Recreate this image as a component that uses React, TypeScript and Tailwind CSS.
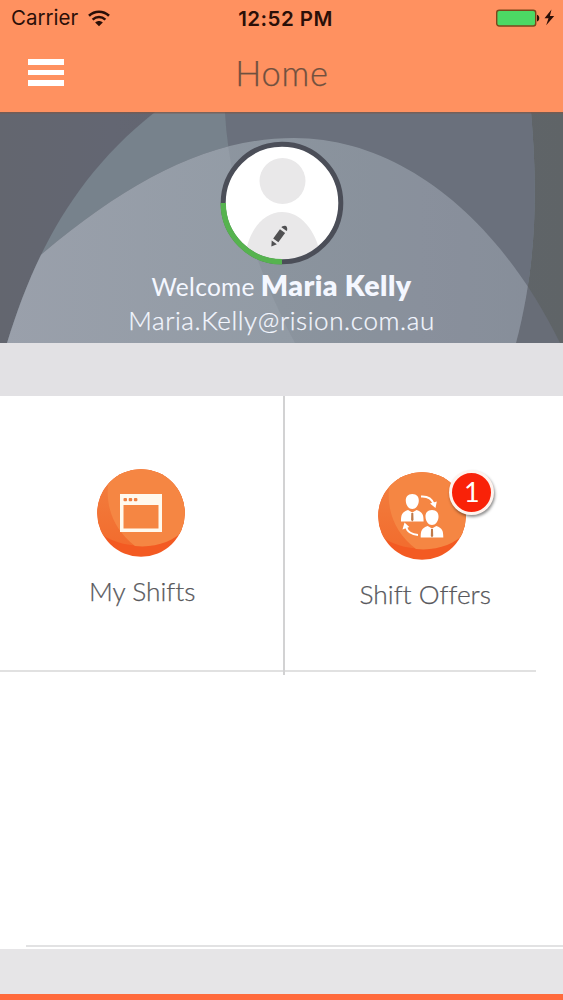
/* ---------------- Header -------------- */
function StatusBar() {
  return (
    <div className="flex h-[36px] items-center justify-between pl-[11px] pr-[8px] text-[#2a0f08] font-['Inter',sans-serif]">
      <div className="flex w-[200px] items-center gap-[10px] pt-px">
        <span className="text-[20.5px] leading-none">Carrier</span>
        <svg width="22" height="17" viewBox="0 0 22 17" fill="none" stroke="currentColor">
          <path d="M1 5.8C6.8.4 15.2.4 21 5.8" strokeWidth="2.6" />
          <path d="M4.6 9.6c3.8-3.4 9-3.4 12.8 0" strokeWidth="2.5" />
          <path d="M11 16.3 7.2 12.6c2.2-2 5.4-2 7.6 0z" fill="currentColor" stroke="none" />
        </svg>
      </div>
      <span className="pt-[2px] pl-[5px] text-[20.5px] font-semibold leading-none tracking-[0.45px] whitespace-nowrap">12:52 PM</span>
      <div className="flex w-[200px] justify-end">
        <svg width="60" height="20" viewBox="0 0 60 20">
          <rect x="1.7" y="2.2" width="39" height="15.8" rx="2.5" fill="#4cd964" stroke="#7b481b" strokeWidth="1.4" />
          <path d="M42 6.8c3 .5 3 6.2 0 6.7z" fill="#2a0f08" />
          <path d="M56.5 1.5 49.5 10.3h4l-2.3 6.9 8-9.2h-4.3z" fill="#2a0f08" />
        </svg>
      </div>
    </div>
  );
}

function TitleBar() {
  return (
    <div className="grid h-[73px] grid-cols-3 items-center px-7">
      <button aria-label="Menu" className="flex w-[36px] flex-col gap-[5px]">
        <span className="h-[5.5px] bg-white" />
        <span className="h-[5.5px] bg-white" />
        <span className="h-[5.5px] bg-white" />
      </button>
      <h1 className="pt-px pl-px text-center text-[34.5px] font-light leading-none tracking-[0.7px] text-[#70503f] [-webkit-text-stroke:0.25px]">
        Home
      </h1>
    </div>
  );
}

/* ---------------- Profile -------------- */
function BannerArt() {
  return (
    <svg className="absolute inset-0" width="563" height="231" viewBox="0 0 563 231">
      <defs>
        <linearGradient id="base">
          <stop offset="0" stopColor="#63666f" />
          <stop offset=".2" stopColor="#636672" />
          <stop offset="1" stopColor="#5f6467" />
        </linearGradient>
        <linearGradient id="arch">
          <stop offset="0" stopColor="#9aa0ab" />
          <stop offset=".5" stopColor="#929ba5" />
          <stop offset="1" stopColor="#8c939f" />
        </linearGradient>
        <clipPath id="disc">
          <path d="M7 231C32 150 70 67 155 0H531C536 60 540 140 516 231z" />
        </clipPath>
        <clipPath id="left">
          <path d="M7 231C32 150 70 67 155 0H563V231z" />
        </clipPath>
      </defs>
      <rect width="563" height="231" fill="url(#base)" />
      <path d="M7 231C32 150 70 67 155 0H531C536 60 540 140 516 231z" fill="#77828c" />
      <path d="M225 0H531C536 60 540 140 516 231H295C260 165 229 80 225 0z" fill="#6a717c" />
      <g clipPath="url(#left)">
        <path d="M0 231V178L43 141C130 68 210 26 294 26C400 26 498 105 560 231z" fill="#686d77" />
      </g>
      <g clipPath="url(#disc)">
        <path d="M0 231V178L43 141C130 68 210 26 294 26C400 26 498 105 560 231z" fill="url(#arch)" />
        <path d="M225 0H563V231H295C260 165 229 80 225 0z" fill="#6a717c" fillOpacity=".16" />
      </g>
      <rect width="563" height="1.5" fill="#7b5a4c" fillOpacity=".75" />
    </svg>
  );
}

function Avatar() {
  return (
    <svg className="shrink-0" width="124" height="124" viewBox="0 0 124 124">
      <defs>
        <clipPath id="face">
          <circle cx="62" cy="62" r="56.5" />
        </clipPath>
      </defs>
      <circle cx="62" cy="62" r="57" fill="#fff" />
      <g clipPath="url(#face)" fill="#e9e8e9">
        <circle cx="62.5" cy="40" r="23" />
        <path d="M24 124C26 92 42 71 62 71s37 21 40 53z" />
      </g>
      <circle cx="62" cy="62" r="58.8" fill="none" stroke="#4b4e58" strokeWidth="5" />
      <path d="M3.2 62A58.8 58.8 0 0 0 62 120.8" fill="none" stroke="#56b34f" strokeWidth="5.4" />
      <g transform="translate(59 95) rotate(36)" fill="#505052">
        <path d="M-3.2-9.500q3.200-5.500 6.400 0v1h-6.400zM-3.200-6h6.400v11.500h-6.400zM-3.200 8h6.400l-3.200 5z" />
      </g>
    </svg>
  );
}

function Profile() {
  return (
    <section className="relative h-[231px] overflow-hidden">
      <BannerArt />
      <div className="relative flex flex-col items-center pt-[29px] text-[#f4f7ff]">
        <Avatar />
        <p className="mt-[5px] flex items-baseline gap-[6px] leading-[30px] whitespace-nowrap">
          <span className="text-[24.5px] tracking-[0.3px]">Welcome</span>
          <span className="text-[28.5px] font-extrabold tracking-[0.4px]">Maria Kelly</span>
        </p>
        <p className="mt-[2px] text-[26px] font-light leading-[32px] tracking-[0.6px] whitespace-nowrap [-webkit-text-stroke:0.25px]">
          Maria.Kelly@rision.com.au
        </p>
      </div>
    </section>
  );
}

/* ---------------- Tiles -------------- */
function Orb({ id, children }: { id: string; children: React.ReactNode }) {
  return (
    <svg width="88" height="88" viewBox="0 0 88 88">
      <defs>
        <clipPath id={id}>
          <circle cx="44" cy="44" r="43.8" />
        </clipPath>
        <linearGradient id={id + "-shade"} x2="0" y2="1">
          <stop offset="0" stopColor="#f28040" />
          <stop offset="1" stopColor="#f26c2e" />
        </linearGradient>
      </defs>
      <g clipPath={`url(#${id})`}>
        <rect width="88" height="88" fill="#f35a22" />
        <path d="M0 0H88V60C68 82 24 82 0 62z" fill={`url(#${id}-shade)`} />
        <path d="M12 8C7 36 16 60 38 77C58 79 76 73 88 60V0H12z" fill="#f58643" />
      </g>
      {children}
    </svg>
  );
}

function Person({ x, y }: { x: number; y: number }) {
  return (
    <g transform={`translate(${x} ${y})`}>
      <path d="M0-1c4.500 0 6.800 3 6.500 7C6.200 10.500 3.500 14 0 14S-6.200 10.500-6.500 6C-6.800 2-4.500-1 0-1z" fill="#fff" />
      <path d="M-11.300 26.500c0-7 1-9.500 7-11.500L0 17.500 4.300 15C10.300 17 11.300 19.500 11.300 26.500z" fill="#fff" />
      <path d="M-1 18h2l.2 7L0 26.500l-1.200-1.500z" fill="#c07a4a" />
    </g>
  );
}

function Tiles() {
  return (
    <section className="relative h-[276px] text-[#58585c]">
      <div className="grid h-full grid-cols-2">
        <div className="flex flex-col items-center pt-[73px]">
          <Orb id="shifts">
            <path d="M23 25h42v38H23zM26.500 36v23.500h35v-23.500z" fill="#fff9ee" fillRule="evenodd" />
            <g fill="#ef8043">
              <rect x="26.500" y="29" width="3.500" height="3.200" rx="1" />
              <rect x="31.700" y="29" width="3.500" height="3.200" rx="1" />
              <rect x="36.900" y="29" width="3.500" height="3.200" rx="1" />
            </g>
          </Orb>
          <span className="mt-[17px] pl-[3px] text-[26.3px] font-light leading-[34px] whitespace-nowrap [-webkit-text-stroke:0.25px]">
            My Shifts
          </span>
        </div>
        <div className="flex flex-col items-center pt-[76px]">
          <div className="relative h-[88px]">
            <Orb id="offers">
              <Person x={34.3} y={23} />
              <Person x={54} y={39} />
              <g fill="none" stroke="#fff" strokeWidth="2">
                <path d="M43 24.500c7-.5 11 2.500 12.800 7.500" />
                <path d="M40 63c-6.500-.5-10.500-3-12-8" />
              </g>
              <path d="m52 31.500 6.800-2-1.300 6.500zM24.500 57.500l2-7 4.800 4.500z" fill="#fff" />
            </Orb>
            <span className="absolute -top-[2px] left-[71px] flex size-[45px] items-center justify-center rounded-full border-[3px] border-[#fff3ee] bg-[#f92208] pb-[3px] text-[27px] leading-none text-white shadow-[1px_2px_3px_rgba(0,0,0,0.45)]">
              1
            </span>
          </div>
          <span className="mt-[17px] pl-[6px] text-[26.3px] font-light leading-[34px] whitespace-nowrap [-webkit-text-stroke:0.25px]">
            Shift Offers
          </span>
        </div>
      </div>
      <div className="absolute left-0 top-[274px] h-[2px] w-[536px] bg-[#e1e1e1]" />
      <div className="absolute left-[283px] top-0 h-[279px] w-[2px] bg-[#d2d2d3]" />
    </section>
  );
}

export default function App() {
  return (
    <main className="flex h-[1000px] w-[563px] flex-col overflow-hidden bg-white font-['Lato',sans-serif] [font-variant-ligatures:none]">
      <header className="h-[112px] shrink-0 bg-[#ff9160]">
        <StatusBar />
        <TitleBar />
      </header>
      <Profile />
      <div className="h-[53px] shrink-0 bg-[#e2e1e4]" />
      <Tiles />
      <div className="flex-1" />
      <div className="mb-[2px] ml-[26px] h-[2px] bg-[#e2e2e3]" />
      <footer className="h-[51px] shrink-0 border-b-[6px] border-[#ff6a3c] bg-[#e6e5e7]" />
    </main>
  );
}
